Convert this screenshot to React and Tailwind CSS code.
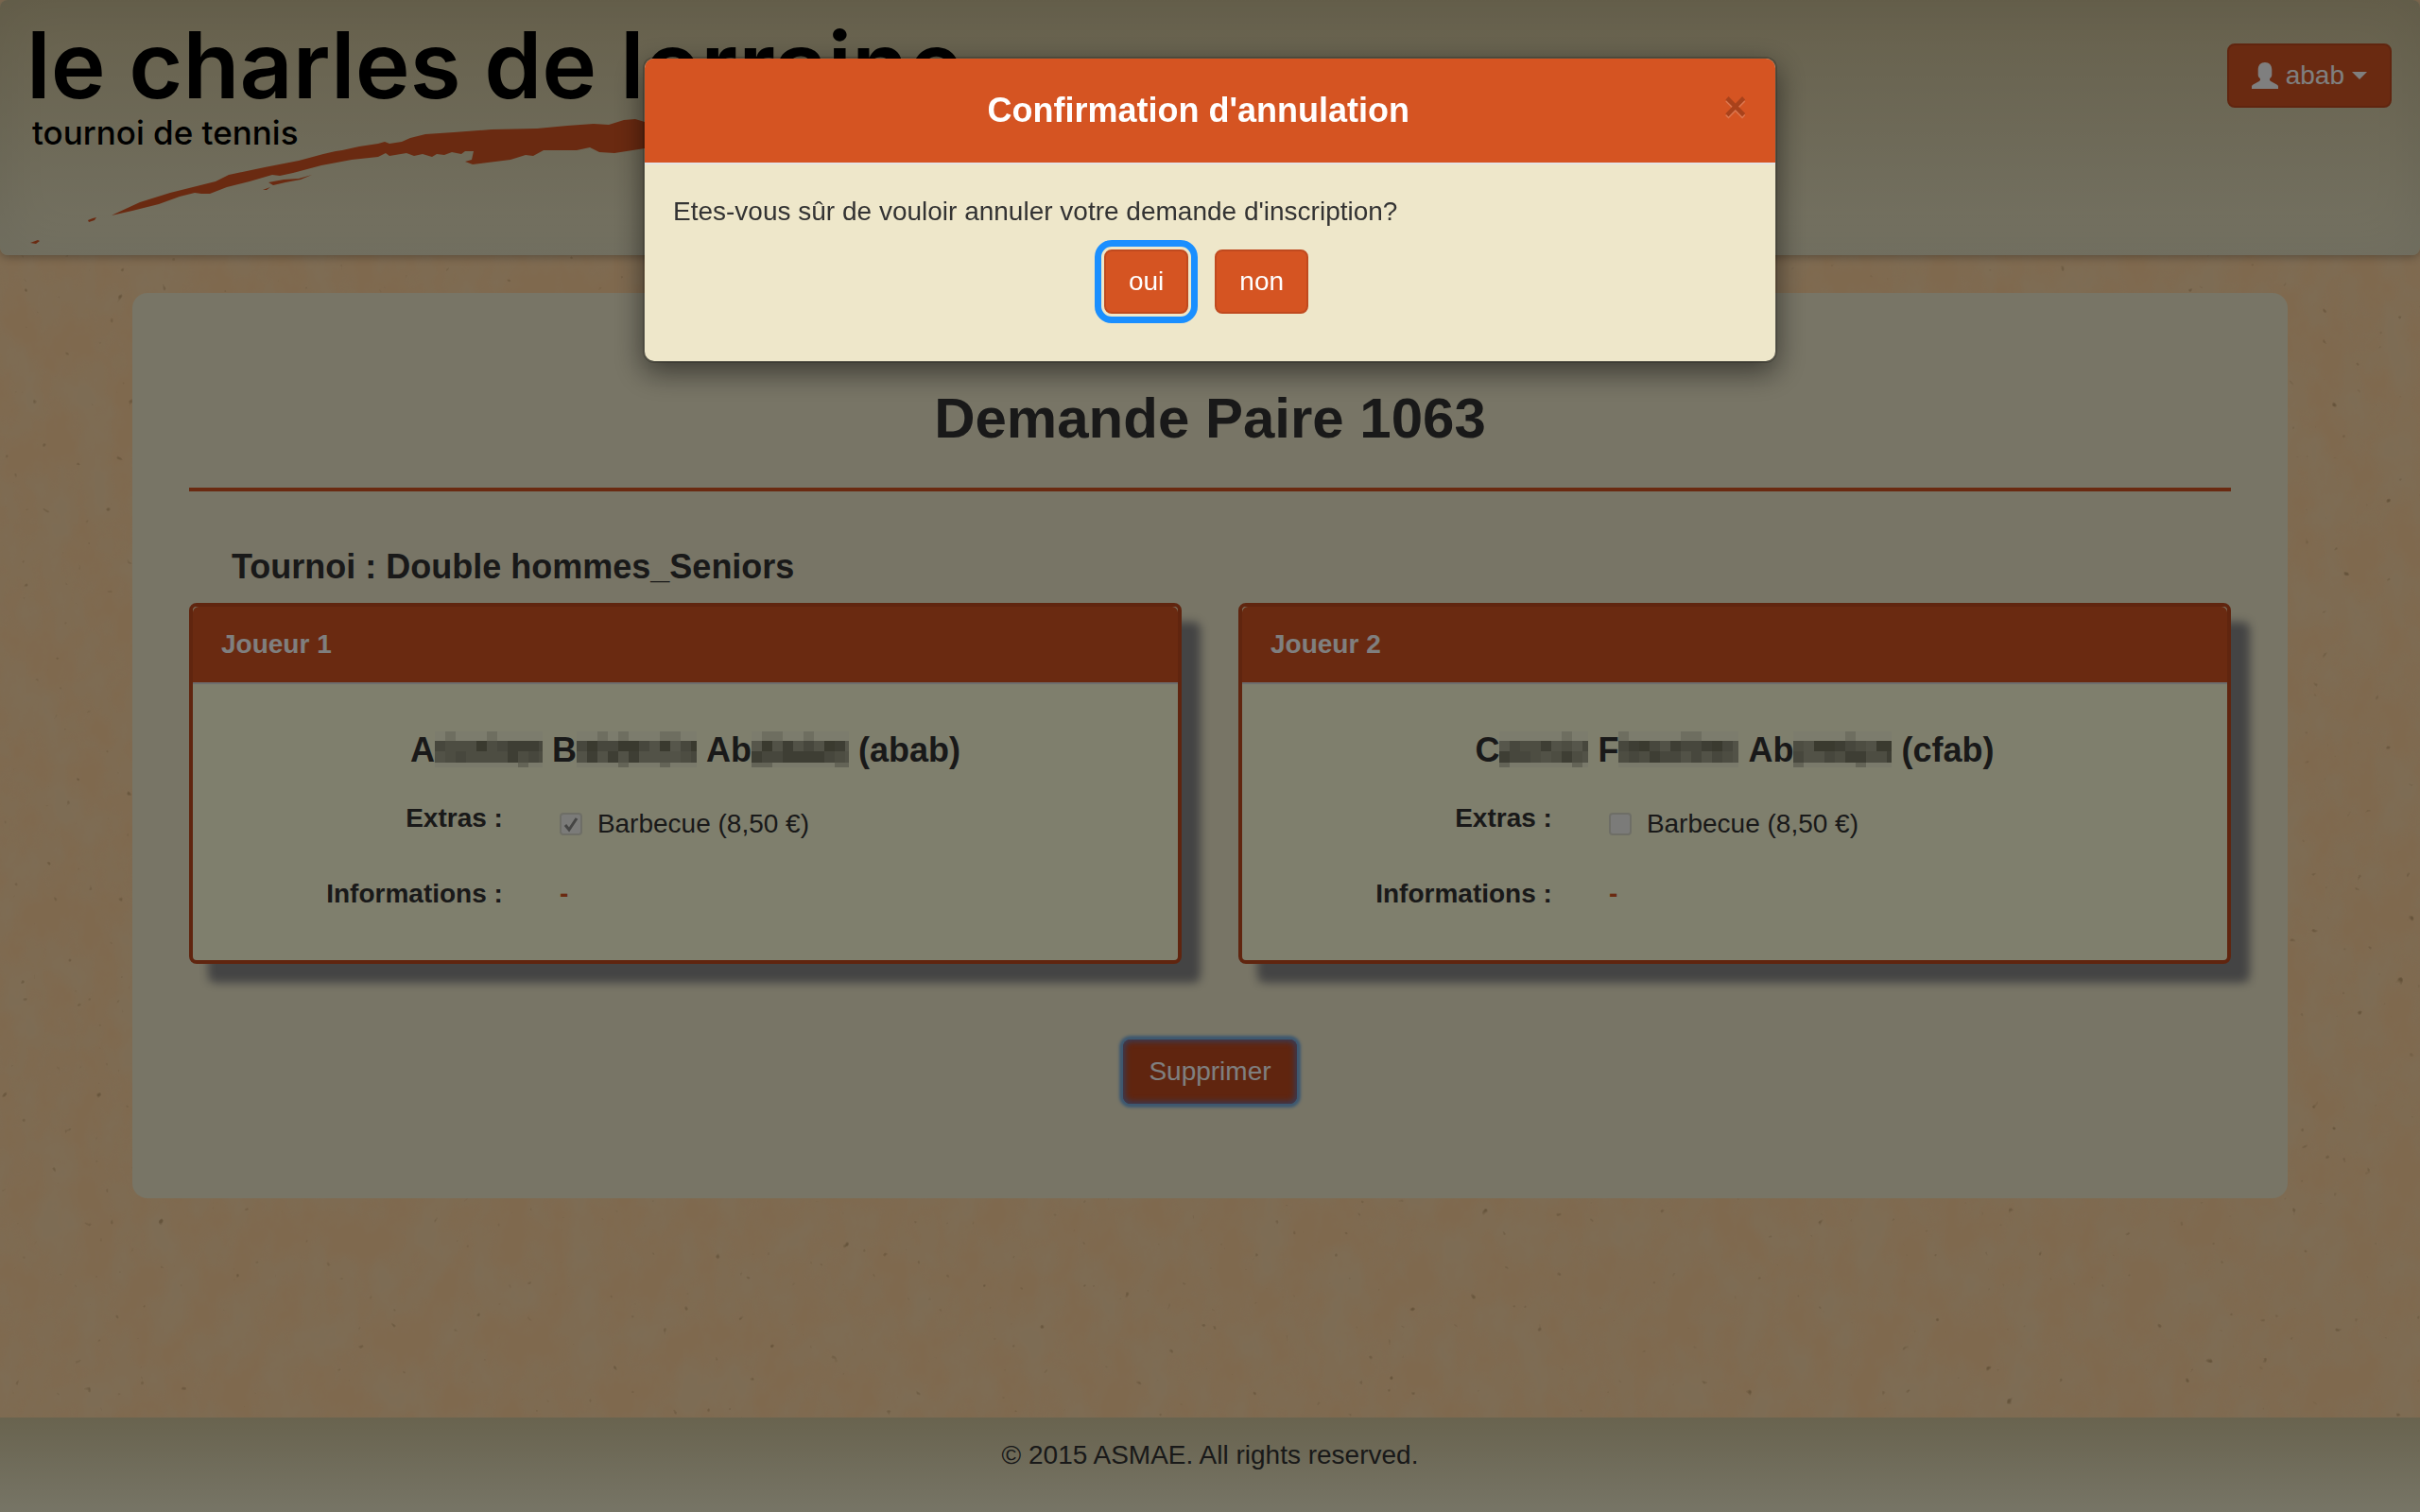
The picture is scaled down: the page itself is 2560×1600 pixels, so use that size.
function RedactedName({ parts, login }) {
  return (
    <h4 className="flex items-center justify-center gap-[10px] text-[36px] leading-[40px] font-bold text-[#333]">
      {parts.map((p, i) => (
        <span key={i} className="flex items-center">
          {p.text}
          <Mosaic width={p.width} tiles={p.tiles} />
        </span>
      ))}
      <span>({login})</span>
    </h4>
  );
}

const SHADES = ["#7c7c68", "#a4a48e", "#8e8e7a", "#9a9a84", "#74745f", "#acac96"];

function Mosaic({ width, tiles }) {
  const cell = 11;
  const cols = Math.ceil(width / cell);
  const cells = [];
  for (let c = 0; c < cols; c++) {
    const n = tiles.charCodeAt(c % tiles.length);
    cells.push(<rect key={"t" + c} x={c * cell} y="0" width={cell} height="10" fill={n % 5 === 0 ? "#dcdcc0" : "#f8f8da"} />);
    cells.push(<rect key={"a" + c} x={c * cell} y="10" width={cell} height="11" fill={SHADES[(n + 1) % 6]} />);
    cells.push(<rect key={"b" + c} x={c * cell} y="21" width={cell} height="12" fill={SHADES[(n * 5 + c) % 4]} />);
    cells.push(<rect key={"d" + c} x={c * cell} y="33" width={cell} height="5" fill={n % 7 === 0 ? "#c8c8ae" : "#f4f4d6"} />);
  }
  return (
    <svg width={width} height="40" viewBox={`0 0 ${width} 40`} shapeRendering="crispEdges" aria-hidden="true">
      {cells}
    </svg>
  );
}

function PlayerPanel({ id, title, parts, login, checked }) {
  return (
    <section className="rounded-lg border-4 border-[#c04a1f] bg-[#fffedb] shadow-[20px_20px_10px_#888]">
      <h3 className="rounded-t-md border-b-2 border-[#ddd] bg-[#d55422] px-[30px] py-5 text-[28px] leading-[40px] font-bold text-white">
        {title}
      </h3>
      <div className="px-[30px] pt-[50px] pb-[50px]">
        <RedactedName parts={parts} login={login} />
        <div className="mt-[32px] grid grid-cols-[21fr_44fr] gap-x-[60px]">
          <span className="text-right text-[28px] leading-[40px] font-bold">Extras :</span>
          <label htmlFor={id} className="flex items-center gap-4 pt-[6px] text-[28px] leading-[40px]">
            <span className="relative flex">
              <input
                id={id}
                type="checkbox"
                disabled
                defaultChecked={checked}
                className="peer size-6 appearance-none rounded border-2 border-[#dcdccc] bg-[#f6f6f2]"
              />
              <svg viewBox="0 0 24 24" className="absolute inset-0 hidden size-6 peer-checked:block" aria-hidden="true">
                <path d="M6 13l4 5L18 6" fill="none" stroke="#8a8a88" strokeWidth="3" />
              </svg>
            </span>
            Barbecue (8,50 €)
          </label>
        </div>
        <div className="mt-[34px] grid grid-cols-[21fr_44fr] gap-x-[60px] text-[28px] leading-[40px] font-bold">
          <span className="text-right">Informations :</span>
          <span className="text-[#d55422]">-</span>
        </div>
      </div>
    </section>
  );
}

function Logo() {
  return (
    <a href="#" className="relative flex h-[270px] w-[1060px] flex-col items-start pt-4 pl-7 text-black">
      <svg viewBox="0 0 1060 270" className="absolute inset-0 size-full" aria-hidden="true">
        <g fill="#d55422">
          <path d="M118 228L122 226 148 214 180 204 208 197 228 192 242 185 280 177 316 170 342 163 355 160 362 159 380 155 400 152 407 150 412 152 425 150 434 146 450 142 480 140 520 137 568 136 600 133 628 131 644 132 660 127 672 126 682 129 760 124V150L682 157 650 162 634 161 624 156 610 159 575 159 564 165 556 164 540 169 500 174 492 171 499 169 501 160 492 160 488 163 478 161 470 164 462 163 457 166 447 163 438 165 430 162 412 165 408 162 400 166 372 169 340 175 310 183 296 186 288 185 264 192 240 198 222 205 213 205 206 204 190 208 168 216 140 223Z" />
          <path d="M284 193L300 190 316 189 330 185 318 190 302 193 289 196Z" />
          <path d="M93 233L98 231 102 230 100 233 94 235Z" />
          <path d="M32 257L40 254 42 255 38 258Z" />
          <path d="M278 201L286 198 282 201Z" />
        </g>
      </svg>
      <span className="relative font-[Inter] text-[98px] leading-[106px] font-semibold whitespace-nowrap">
        le charles de lorraine
      </span>
      <span className="relative pl-[6px] font-[Inter] text-[35px] leading-[36px] font-medium whitespace-nowrap">
        tournoi de tennis
      </span>
    </a>
  );
}

function Paper() {
  return (
    <svg className="absolute inset-0 -z-10 size-full" aria-hidden="true">
      <filter id="paper" x="0" y="0" width="100%" height="100%">
        <feTurbulence type="fractalNoise" baseFrequency="0.025 0.018" numOctaves="5" seed="4" />
        <feColorMatrix values="0 0 0 0 0.88  0 0 0 0 0.88  0 0 0 0 0.66  2 0 0 0 -0.5" />
      </filter>
      <filter id="specks" x="0" y="0" width="100%" height="100%">
        <feTurbulence type="fractalNoise" baseFrequency="0.09" numOctaves="2" seed="9" />
        <feColorMatrix values="0 0 0 0 0.4  0 0 0 0 0.25  0 0 0 0 0.1  9 0 0 0 -7" />
      </filter>
      <rect width="100%" height="100%" fill="#ffd29c" />
      <rect width="100%" height="100%" filter="url(#paper)" opacity="0.22" />
      <rect width="100%" height="100%" filter="url(#specks)" opacity="0.6" />
    </svg>
  );
}

export default function App() {
  return (
    <div className="relative isolate flex min-h-screen flex-col font-['Liberation_Sans',Arial,sans-serif] text-[28px] leading-[40px] text-[#333]">
      <Paper />
      <header className="flex items-start justify-between rounded-lg bg-linear-to-b from-[#cdc198] to-[#e9e4c5] pr-[30px] shadow-[inset_0_0_60px_rgba(0,0,0,0.06),0_2px_10px_rgba(0,0,0,0.3)]">
        <Logo />
        <button
          type="button"
          className="mt-[46px] flex h-[68px] items-center rounded-lg border-2 border-[#c04a1f] bg-[#d55422] px-[24px] text-white"
        >
          <svg viewBox="0 0 28 28" className="mr-2 size-7 fill-white" aria-hidden="true">
            <path d="M14 0c4.500 0 7.300 2.800 7.300 8v5c0 1.500-.6 2.500-1.300 3.300-.8.8-1 1.200-1 2 0 .8.400 1.200 1.200 1.700l6.300 3.500c1 .6 1.500 1.200 1.500 2.200V28H0v-2.300c0-1 .5-1.600 1.500-2.200l6.300-3.500c.8-.5 1.200-.9 1.200-1.700 0-.8-.2-1.200-1-2C7.300 15.500 6.700 14.500 6.700 13V8c0-5.200 2.800-8 7.300-8Z" />
          </svg>
          abab
          <svg viewBox="0 0 16 8" className="ml-2 h-2 w-4 fill-white" aria-hidden="true">
            <path d="M0 0h16L8 8Z" />
          </svg>
        </button>
      </header>

      <main className="mx-[140px] mt-10 rounded-2xl bg-[#f0eacc] px-[60px] pt-[100px] pb-[100px]">
        <h1 className="text-center text-[60px] leading-[66px] font-bold">Demande Paire 1063</h1>
        <hr className="mt-[40px] border-0 border-t-4 border-[#d55422]" />
        <h2 className="mt-[60px] px-[45px] text-[36px] leading-[40px] font-bold">Tournoi : Double hommes_Seniors</h2>
        <div className="mt-[18px] grid grid-cols-2 gap-[60px]">
          <PlayerPanel
            id="bbq1"
            title="Joueur 1"
            login="abab"
            checked
            parts={[
              { text: "A", width: 114, tiles: "anthonyqwe" },
              { text: "B", width: 127, tiles: "mosaicgrid" },
              { text: "Ab", width: 103, tiles: "pixelsrow" },
            ]}
          />
          <PlayerPanel
            id="bbq2"
            title="Joueur 2"
            login="cfab"
            checked={false}
            parts={[
              { text: "C", width: 94, tiles: "pattern" },
              { text: "F", width: 127, tiles: "squares" },
              { text: "Ab", width: 104, tiles: "blocks" },
            ]}
          />
        </div>
        <div className="mt-20 flex justify-center">
          <button
            type="button"
            className="h-[68px] rounded-lg bg-[#c04a1f] px-[27px] text-white shadow-[0_0_3px_4px_#7ab0e0,inset_0_0_6px_2px_#6a7ab8]"
          >
            Supprimer
          </button>
        </div>
      </main>

      <footer className="mt-auto h-[100px] bg-linear-to-b from-[#d2c79e] to-[#eeeacc] pt-5 text-center">
        © 2015 ASMAE. All rights reserved.
      </footer>

      <div className="fixed inset-0 flex items-start justify-center bg-black/50 pt-[60px]">
        <div
          role="dialog"
          aria-modal="true"
          aria-labelledby="dialog-title"
          className="w-full max-w-[1200px] overflow-hidden rounded-xl border-2 border-black/20 bg-[#eee7ca] bg-clip-padding shadow-[0_10px_30px_rgba(0,0,0,0.5)]"
        >
          <div className="flex h-[112px] items-center border-b-2 border-[#e5e5e5] bg-[#d55422] px-[30px]">
            <h4 id="dialog-title" className="flex-1 text-center text-[36px] leading-[50px] font-bold text-white">
              Confirmation d'annulation
            </h4>
            <button
              type="button"
              aria-label="Fermer"
              className="pb-2 text-[42px] leading-[42px] font-bold text-black opacity-20 [text-shadow:0_2px_0_#fff]"
            >
              ×
            </button>
          </div>
          <div className="px-[30px] pt-[30px] pb-[50px]">
            <p>Etes-vous sûr de vouloir annuler votre demande d'inscription?</p>
            <div className="mt-5 flex justify-center gap-7 pr-2">
              <button
                type="button"
                className="h-[68px] rounded-lg border-2 border-[#c04a1f] bg-[#d55422] px-6 text-white outline-[7px] outline-offset-[3px] outline-[#1a8fff] outline-solid"
              >
                oui
              </button>
              <button type="button" className="h-[68px] rounded-lg border-2 border-[#c04a1f] bg-[#d55422] px-6 text-white">
                non
              </button>
            </div>
          </div>
        </div>
      </div>
    </div>
  );
}
